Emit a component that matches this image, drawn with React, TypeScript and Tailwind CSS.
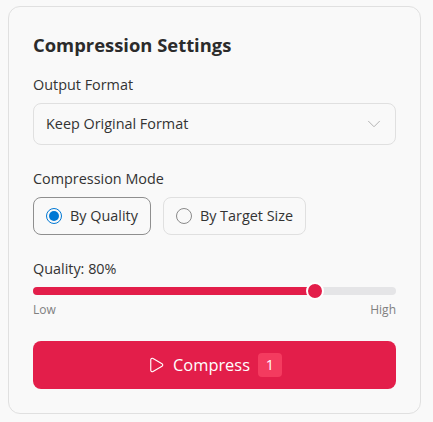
import { ChevronDown, Play } from "lucide-react";

function ModeOption({ label, selected }: { label: string; selected?: boolean }) {
  return (
    <div
      className={`flex h-[38px] items-center gap-2 rounded-lg border px-3 text-[14.4px] ${
        selected ? "border-[#8f8f8f]" : "border-[#e0e0e0]"
      }`}
    >
      {selected ? (
        <span className="flex h-4 w-4 items-center justify-center rounded-full border border-[#0078d4]">
          <span className="h-[10px] w-[10px] rounded-full bg-[#0078d4]" />
        </span>
      ) : (
        <span className="h-4 w-4 rounded-full border border-[#8a8a8a]" />
      )}
      <span>{label}</span>
    </div>
  );
}

export default function App() {
  return (
    <div className="h-[422px] w-[433px] bg-[#f9f9f9] pt-[6px] pl-2 font-['Open_Sans','Noto_Sans',sans-serif] text-[#333333]">
      <section className="flex h-[408px] w-[413px] flex-col rounded-xl border border-[#e0e0e0] px-6 pt-6">
        <h2 className="text-[18.4px] leading-[28px] font-bold text-[#2b2b2b]">Compression Settings</h2>

        <p className="mt-4 text-[14.4px] leading-[20px]">Output Format</p>
        <div className="mt-2 flex h-[42px] items-center justify-between rounded-lg border border-[#e0e0e0] pr-[10px] pl-3 text-[14.4px]">
          <span>Keep Original Format</span>
          <ChevronDown className="h-[22px] w-[22px] text-[#adadad]" strokeWidth={1} />
        </div>

        <p className="mt-6 text-[14.4px] leading-[20px]">Compression Mode</p>
        <div className="mt-2 flex gap-3">
          <ModeOption label="By Quality" selected />
          <ModeOption label="By Target Size" />
        </div>

        <p className="mt-6 text-[14.4px] leading-[20px]">Quality: 80%</p>
        <div className="relative mt-2 h-2 rounded-full bg-[#e5e5e7]">
          <div className="h-2 w-[78%] rounded-full bg-[#e31e4a]" />
          <span className="absolute top-[-5px] left-[273px] h-[18px] w-[18px] rounded-full border-2 border-white bg-[#e31e4a]" />
        </div>
        <div className="mt-[7px] flex justify-between text-[12px] leading-[16px] text-[#808080]">
          <span>Low</span>
          <span>High</span>
        </div>

        <button className="mt-[23px] flex h-12 items-center justify-center rounded-lg bg-[#e31e4a] text-[16.4px] font-medium text-white">
          <Play className="h-[18px] w-[18px]" strokeWidth={1.5} />
          <span className="ml-2">Compress</span>
          <span className="ml-2 flex h-6 w-6 items-center justify-center rounded bg-[#f43b5f] text-[14.4px] font-medium">1</span>
        </button>
      </section>
    </div>
  );
}
